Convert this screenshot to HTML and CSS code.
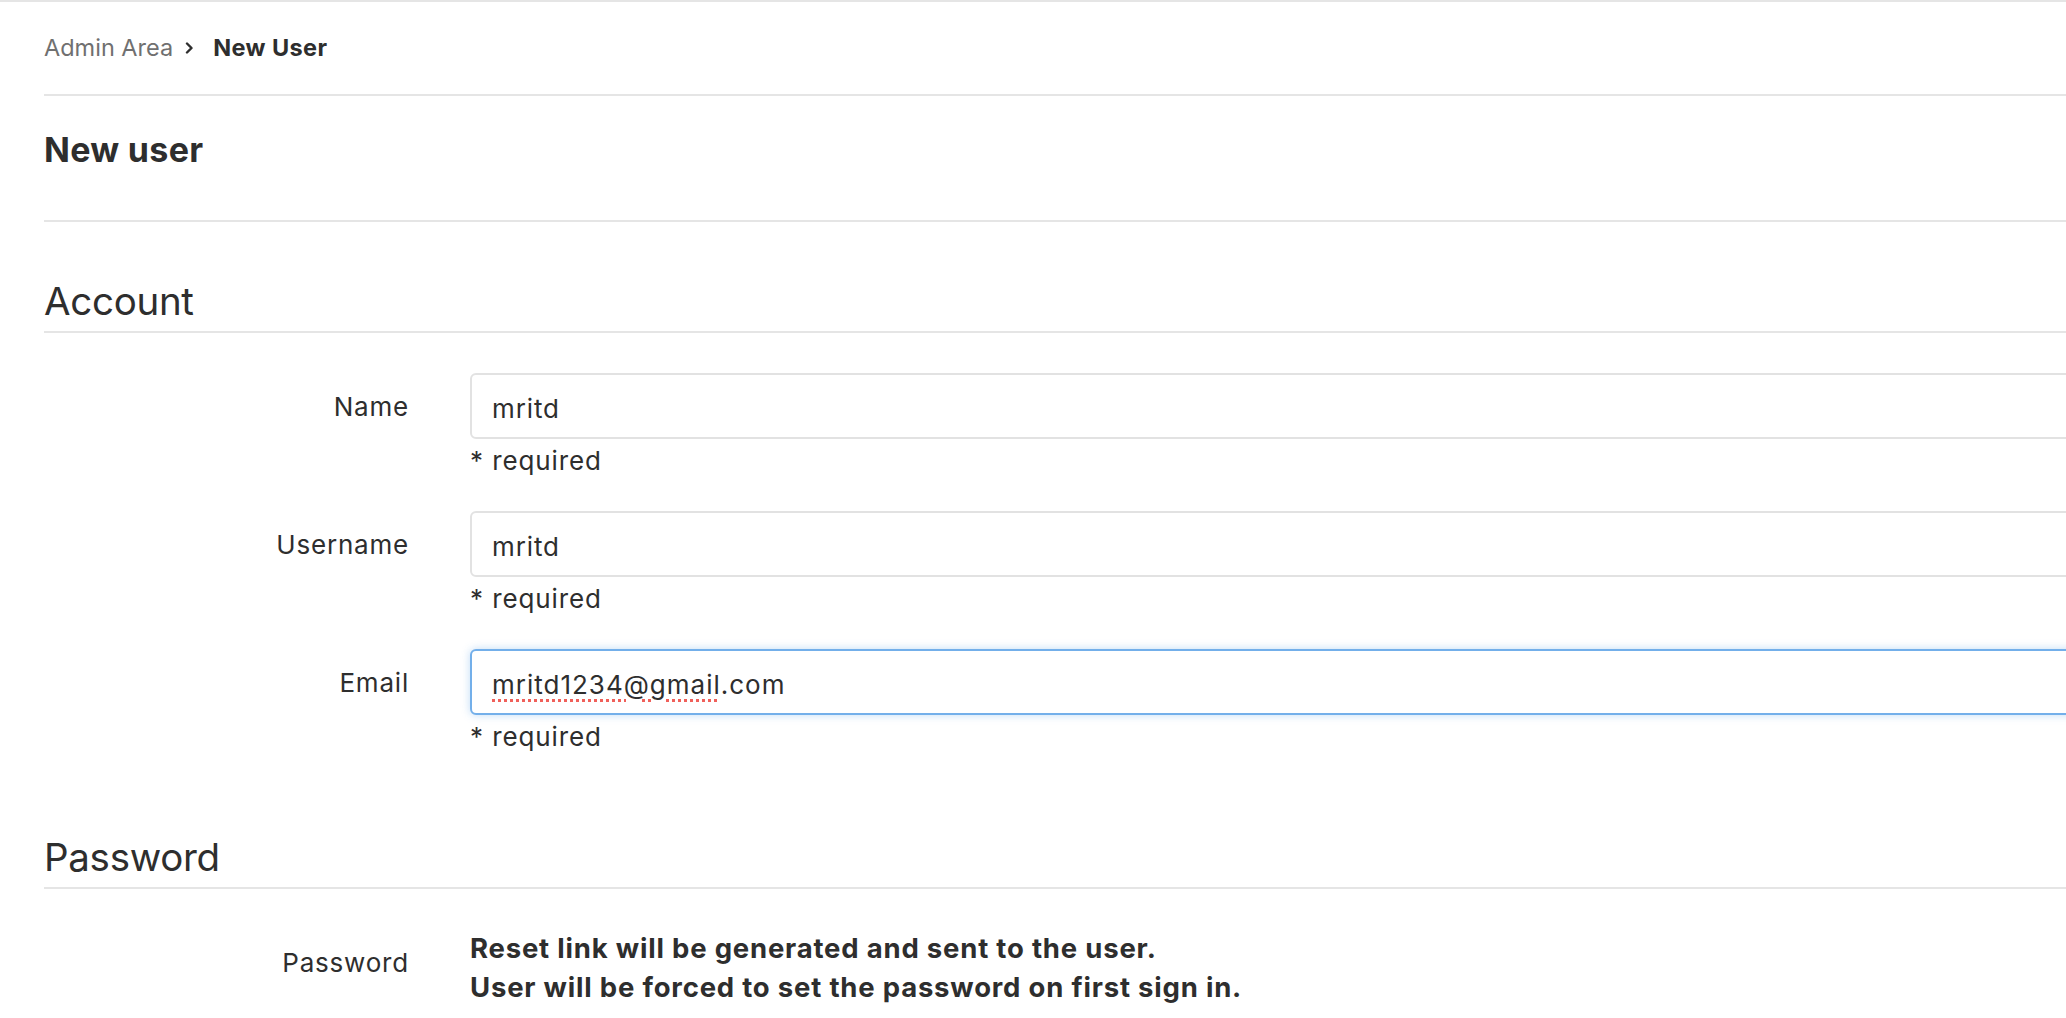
FILE: index.html
```html
<!DOCTYPE html>
<html lang="en">
<head>
<meta charset="utf-8">
<title>New User · Admin Area</title>
<link rel="stylesheet" href="styles.css">
</head>
<body>
<div class="topbar"></div>
<div class="page">
  <nav class="breadcrumbs">
    <a class="crumb" href="#">Admin Area</a>
    <svg class="chevron" width="9" height="12" viewBox="0 0 9 12" aria-hidden="true"><path d="M2 1.5 L6.5 6 L2 10.5" fill="none" stroke="#2e2e2e" stroke-width="2.4" stroke-linecap="round" stroke-linejoin="round"/></svg>
    <span class="crumb-current">New User</span>
  </nav>
  <div class="title-bar">
    <h3 class="page-title">New user</h3>
  </div>

  <section class="fieldset">
    <h4 class="legend">Account</h4>
    <div class="form-row">
      <label class="label">Name</label>
      <div class="field">
        <div class="form-control"><span>mritd</span></div>
        <div class="hint">* required</div>
      </div>
    </div>
    <div class="form-row">
      <label class="label">Username</label>
      <div class="field">
        <div class="form-control"><span>mritd</span></div>
        <div class="hint">* required</div>
      </div>
    </div>
    <div class="form-row">
      <label class="label">Email</label>
      <div class="field">
        <div class="form-control focused"><span><span class="misspelled">mritd1234@gmail</span>.com</span></div>
        <div class="hint">* required</div>
      </div>
    </div>
  </section>

  <section class="fieldset password-set">
    <h4 class="legend">Password</h4>
    <div class="form-row">
      <label class="label">Password</label>
      <div class="field">
        <p class="notice">Reset link will be generated and sent to the user.<br>User will be forced to set the password on first sign in.</p>
      </div>
    </div>
  </section>
</div>
</body>
</html>
```
FILE: styles.css
```css
html, body {
  margin: 0;
  padding: 0;
  overflow: hidden;
  background: #ffffff;
}

body {
  font-family: Inter, "Noto Sans", "Liberation Sans", sans-serif;
  color: #2e2e2e;
}

.topbar {
  height: 2px;
  background: #e5e5e5;
}

.page {
  padding-left: 44px;
  margin-right: -40px;
}

.breadcrumbs {
  display: flex;
  align-items: center;
  height: 92px;
  border-bottom: 2px solid #e5e5e5;
  font-size: 23.5px;
  line-height: 30px;
}

.crumb {
  color: #707070;
  text-decoration: none;
}

.chevron {
  margin-left: 12px;
  margin-right: 19px;
}

.crumb-current {
  font-weight: 700;
  color: #2e2e2e;
  letter-spacing: 0.4px;
}

.title-bar {
  padding: 33px 0 49px;
  border-bottom: 2px solid #e5e5e5;
}

.page-title {
  margin: 0;
  font-size: 34px;
  line-height: 42px;
  font-weight: 700;
  letter-spacing: 0.3px;
}

.fieldset {
  margin-top: 56px;
}

.legend {
  margin: 0;
  font-size: 38.5px;
  line-height: 46px;
  font-weight: 400;
  letter-spacing: -0.3px;
  padding-bottom: 7px;
  border-bottom: 2px solid #e5e5e5;
}

.form-row {
  display: grid;
  grid-template-columns: 364px 1fr;
  column-gap: 62px;
  margin-top: 40px;
}

.form-row + .form-row {
  margin-top: 32px;
}

.label {
  text-align: right;
  font-size: 26px;
  line-height: 37px;
  letter-spacing: 0.8px;
  margin-right: -1px;
  padding-top: 14.5px;
}

.field {
  font-size: 26px;
  letter-spacing: 0.9px;
}

.form-control {
  box-sizing: border-box;
  height: 66px;
  display: flex;
  align-items: center;
  padding: 4px 20px 0;
  border: 2px solid #e2e2e2;
  border-radius: 6px;
  font-size: 26px;
  line-height: 37px;
  background: #fff;
}

.form-control.focused {
  border-color: #73afea;
  box-shadow: 0 0 8px rgba(115, 175, 234, 0.45);
  letter-spacing: 1px;
}

.misspelled {
  text-decoration: underline dotted #f0605a;
  text-decoration-thickness: 3px;
  text-underline-offset: 5px;
}

.hint {
  margin-top: 3px;
  line-height: 37px;
}

.password-set {
  margin-top: 79px;
}

.notice {
  margin: 0;
  font-weight: 700;
  font-size: 27.5px;
  line-height: 39px;
  letter-spacing: 0.8px;
}
```
